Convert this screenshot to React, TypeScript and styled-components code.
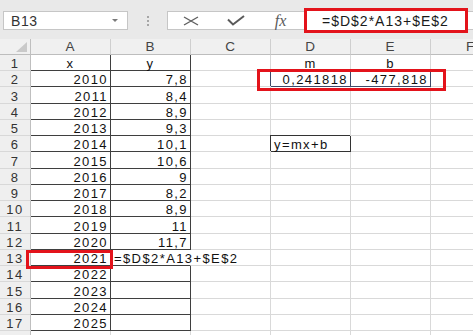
import styled, { createGlobalStyle } from "styled-components";

const GlobalStyle = createGlobalStyle`
  html, body {
    margin: 0;
    padding: 0;
    background: #ffffff;
    overflow: hidden;
  }
  body {
    font-family: "Liberation Sans", Arial, sans-serif;
  }
`;

const Page = styled.div`
  width: 473px;
  height: 335px;
  display: flex;
  flex-direction: column;
  overflow: hidden;
`;

const Toolbar = styled.div`
  height: 39px;
  flex: none;
  box-sizing: border-box;
  padding: 2px 0 0 3px;
  display: flex;
  align-items: center;
  background: #e9e9e9;
`;

const NameBox = styled.div`
  width: 125px;
  height: 19px;
  box-sizing: border-box;
  border: 1px solid #c6c6c6;
  background: #ffffff;
  display: flex;
  align-items: center;
  justify-content: space-between;
  padding: 0 9px 0 7px;
  font-size: 14px;
  letter-spacing: 0.6px;
  color: #333;
`;

const DropArrow = styled.span`
  width: 0;
  height: 0;
  border-left: 3px solid transparent;
  border-right: 3px solid transparent;
  border-top: 3px solid #7a7a7a;
`;

const Dots = styled.div`
  width: 39px;
  display: flex;
  flex-direction: column;
  align-items: center;
  gap: 2px;
`;

const Dot = styled.span`
  width: 2px;
  height: 2px;
  background: #a6a6a6;
`;

const FormulaBar = styled.div`
  flex: 1;
  height: 19px;
  box-sizing: border-box;
  border: 1px solid #c6c6c6;
  border-right: none;
  background: #ffffff;
  display: flex;
  align-items: center;
`;

const IconSlot = styled.div`
  width: 45px;
  display: flex;
  justify-content: center;
  align-items: center;
  color: #5a5a5a;
`;

const Fx = styled.span`
  font-family: "Liberation Serif", "Times New Roman", serif;
  font-style: italic;
  font-size: 16px;
  color: #5a5a5a;
`;

const FormulaInput = styled.div`
  width: 164px;
  height: 25px;
  flex: none;
  box-sizing: border-box;
  margin-left: 1px;
  border: 3px solid #e3131b;
  background: #ffffff;
  display: flex;
  align-items: center;
  padding-left: 15px;
  font-size: 14px;
  letter-spacing: 1px;
  color: #1a1a1a;
`;

const Sheet = styled.div`
  display: grid;
  grid-template-columns: 31px repeat(6, 80px);
  grid-template-rows: 16px repeat(18, 16.24px);
  background: #ffffff;
  font-size: 13px;
  letter-spacing: 1.4px;
`;

const Corner = styled.div`
  grid-row: 1;
  grid-column: 1;
  background: #f0f0f0;
  border-right: 1px solid #bfbfbf;
  border-bottom: 1px solid #bdbdbd;
  display: flex;
  align-items: flex-end;
  justify-content: flex-end;
  padding: 0 3px 2px 0;
`;

const CornerMark = styled.span`
  width: 0;
  height: 0;
  border-left: 11px solid transparent;
  border-bottom: 10px solid #c9c9c9;
`;

const ColHead = styled.div<{ $c: number }>`
  grid-row: 1;
  grid-column: ${(p) => p.$c + 1};
  background: #f0f0f0;
  border-right: 1px solid #cfcfcf;
  border-bottom: 1px solid #bdbdbd;
  display: flex;
  align-items: center;
  justify-content: center;
  font-size: 13.5px;
  letter-spacing: 1px;
  color: #444;
`;

const RowHead = styled.div<{ $r: number }>`
  grid-row: ${(p) => p.$r + 1};
  grid-column: 1;
  background: #efefef;
  border-right: 1px solid #bfbfbf;
  border-bottom: 1px solid #d8d8d8;
  display: flex;
  align-items: flex-end;
  justify-content: center;
  line-height: 12px;
  color: #333;
`;

type Align = "left" | "center" | "right";

const Cell = styled.div<{
  $r: number;
  $c: number;
  $align: Align;
  $line: string;
  $noRight?: boolean;
  $box?: string;
}>`
  grid-row: ${(p) => p.$r + 1};
  grid-column: ${(p) => p.$c + 1};
  min-width: 0;
  border-right: 1px solid
    ${(p) => (p.$noRight ? "transparent" : p.$box ?? p.$line)};
  border-bottom: 1px solid ${(p) => p.$box ?? p.$line};
  box-shadow: ${(p) => (p.$box ? `-1px -1px 0 0 ${p.$box}` : "none")};
  display: flex;
  align-items: flex-end;
  justify-content: ${(p) =>
    p.$align === "left" ? "flex-start" : p.$align === "center" ? "center" : "flex-end"};
  padding: 0 2px 0 ${(p) => (p.$align === "left" ? "3px" : "2px")};
  line-height: 12px;
  white-space: nowrap;
  overflow: visible;
  color: #111;
`;

const Highlight = styled.div<{ $r: number; $c: number; $span: number; $m: string }>`
  grid-row: ${(p) => p.$r + 1};
  grid-column: ${(p) => p.$c + 1} / span ${(p) => p.$span};
  margin: ${(p) => p.$m};
  border: 3px solid #e3131b;
  box-sizing: border-box;
  pointer-events: none;
  z-index: 2;
`;

const columns = ["A", "B", "C", "D", "E", "F"];
const yValues = ["7,8", "8,4", "8,9", "9,3", "10,1", "10,6", "9", "8,2", "8,9", "11", "11,7"];

type CellInfo = { text?: string; align: Align; box?: string; noRight?: boolean };

function cellInfo(r: number, c: number): CellInfo {
  if (r === 1) {
    const head: Record<number, string> = { 1: "x", 2: "y", 4: "m", 5: "b" };
    return { text: head[c], align: "center" };
  }
  if (c === 1 && r <= 17) return { text: String(2008 + r), align: "right" };
  if (c === 2 && r <= 12) return { text: yValues[r - 2], align: "right" };
  if (c === 2 && r === 13) return { text: "=$D$2*A13+$E$2", align: "left", noRight: true };
  if (r === 2 && c === 4) return { text: "0,241818", align: "right", box: "#3d4a68" };
  if (r === 2 && c === 5) return { text: "-477,818", align: "right", box: "#3d4a68" };
  if (r === 6 && c === 4) return { text: "y=mx+b", align: "left", box: "#333333" };
  return { align: "right" };
}

function CancelIcon() {
  return (
    <svg width="16" height="10" viewBox="0 0 16 10">
      <path d="M1 1 L15 9 M15 1 L1 9" stroke="#5f5f5f" strokeWidth="1.4" fill="none" />
    </svg>
  );
}

function CheckIcon() {
  return (
    <svg width="18" height="11" viewBox="0 0 18 11">
      <path d="M1 4.5 L6 9.5 L17 1" stroke="#5a5a5a" strokeWidth="2" fill="none" />
    </svg>
  );
}

export default function App() {
  const rows = Array.from({ length: 18 }, (_, i) => i + 1);

  return (
    <Page>
      <GlobalStyle />
      <Toolbar>
        <NameBox>
          B13
          <DropArrow />
        </NameBox>
        <Dots>
          <Dot />
          <Dot />
          <Dot />
        </Dots>
        <FormulaBar>
          <IconSlot>
            <CancelIcon />
          </IconSlot>
          <IconSlot>
            <CheckIcon />
          </IconSlot>
          <IconSlot>
            <Fx>fx</Fx>
          </IconSlot>
          <FormulaInput>=$D$2*A13+$E$2</FormulaInput>
        </FormulaBar>
      </Toolbar>

      <Sheet>
        <Corner>
          <CornerMark />
        </Corner>
        {columns.map((name, i) => (
          <ColHead key={name} $c={i + 1}>
            {name}
          </ColHead>
        ))}
        {rows.map((r) => (
          <RowHead key={`h${r}`} $r={r}>
            {r < 18 ? r : null}
          </RowHead>
        ))}
        {rows.map((r) =>
          columns.map((_, i) => {
            const c = i + 1;
            const info = cellInfo(r, c);
            const inTable = c <= 2 && r <= 17;
            return (
              <Cell
                key={`${r}-${c}`}
                $r={r}
                $c={c}
                $align={info.align}
                $line={inTable ? "#3f3f3f" : "#d9d9d9"}
                $noRight={info.noRight}
                $box={info.box}
              >
                {info.text}
              </Cell>
            );
          })
        )}
        <Highlight $r={2} $c={4} $span={2} $m="-2px -15px -4px -14px" />
        <Highlight $r={13} $c={1} $span={1} $m="0 -2px -3px -5px" />
      </Sheet>
    </Page>
  );
}
